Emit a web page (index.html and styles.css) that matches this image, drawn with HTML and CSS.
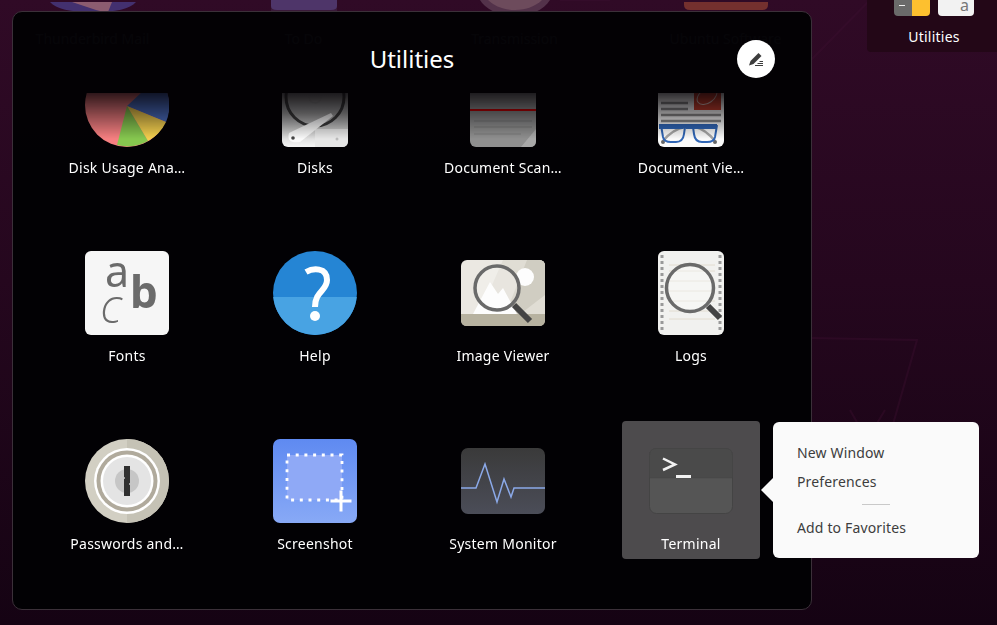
FILE: index.html
```html
<!DOCTYPE html>
<html lang="en">
<head>
<meta charset="utf-8">
<title>Utilities</title>
<link rel="stylesheet" href="styles.css">
</head>
<body>
<div class="desktop">
  <svg class="wallpaper" viewBox="0 0 997 625" aria-hidden="true">
    <g fill="none" stroke="#3c0f30" stroke-width="2">
      <path d="M811 338 L917 340 L880 470 L811 560"/>
      <path d="M850 410 L867 440 L885 410"/>
      <path d="M870 0 L811 60"/>
      <path d="M560 0 L610 0"/>
    </g>
  </svg>

  <div class="bg-apps">
    <div class="bg-app">
      <svg class="bg-icon" width="86" height="12" viewBox="0 0 86 12"><path d="M0 0C6 7 20 10 43 10S80 7 86 0Z" fill="#43306f"/><path d="M22 0 L46 8 Q52 10 58 10 L62 0Z" fill="#8c5c70"/></svg>
      <span class="bg-label">Thunderbird Mail</span>
    </div>
    <div class="bg-app">
      <svg class="bg-icon" width="66" height="16" viewBox="0 0 66 16"><path d="M0 4H66V12Q66 16 60 16H6Q0 16 0 12Z" fill="#3a1a3a"/><path d="M0 0H66V6Q66 10 60 10H6Q0 10 0 6Z" fill="#4e3569"/></svg>
      <span class="bg-label">To Do</span>
    </div>
    <div class="bg-app">
      <svg class="bg-icon" width="70" height="16" viewBox="0 0 70 16"><path d="M0 0C6 10 20 16 35 16S64 10 70 0Z" fill="#53324a"/><path d="M8 0C14 6 24 10 35 10S56 6 62 0Z" fill="#6d4b5c"/></svg>
      <span class="bg-label">Transmission</span>
    </div>
    <div class="bg-app">
      <svg class="bg-icon" width="84" height="12" viewBox="0 0 84 12"><path d="M0 0H84V3Q84 8 78 8H6Q0 8 0 3Z" fill="#74302e"/></svg>
      <span class="bg-label">Ubuntu Software</span>
    </div>
    <div class="folder-tile">
      <svg class="mini" width="80" height="16" viewBox="0 0 80 16" aria-hidden="true">
        <path d="M0 0H18V16H4Q0 16 0 12Z" fill="#6a6a6a"/>
        <path d="M18 0H36V12Q36 16 32 16H18Z" fill="#fdc02f"/>
        <path d="M5 5.500H11" stroke="#eee" stroke-width="1"/>
        <path d="M44 0H80V12Q80 16 76 16H48Q44 16 44 12Z" fill="#f2f2f2"/>
        <text x="66" y="11" class="mini-a">a</text>
      </svg>
      <span class="folder-label">Utilities</span>
    </div>
  </div>

  <section class="dialog">
    <header class="dialog-head">
      <h1 class="dialog-title">Utilities</h1>
      <button class="edit-btn" aria-label="Rename">
        <svg width="16" height="16" viewBox="0 0 16 16"><path d="M1 14.500 L2.500 10 L10.500 2 L13.500 5 L5.500 13 Z" fill="#3d3d3d"/><path d="M7 14.500H15M9.500 12.500H15M11.500 10.500H15" stroke="#3d3d3d" stroke-width="1"/></svg>
      </button>
    </header>

    <div class="viewport">
      <div class="app-grid">

        <div class="app">
          <svg class="icon" viewBox="0 0 84 84">
            <circle cx="42" cy="42" r="42" fill="#f67f81"/>
            <path d="M42 43 L73 14 A42 42 0 0 1 81 59Z" fill="#4c70c4"/>
            <path d="M42 43 L81 59 A42 42 0 0 1 63 78Z" fill="#f5d04f"/>
            <path d="M42 43 L63 78 A42 42 0 0 1 32 82Z" fill="#86c74f"/>
          </svg>
          <span class="app-label">Disk Usage Ana…</span>
        </div>

        <div class="app">
          <svg class="icon" viewBox="0 0 84 84">
            <defs><linearGradient id="dk" x1="0" y1="0" x2="0" y2="1"><stop offset="0" stop-color="#777"/><stop offset=".6" stop-color="#a0a0a0"/><stop offset="1" stop-color="#f5f5f5"/></linearGradient></defs>
            <rect x="9" y="0" width="66" height="84" rx="6" fill="url(#dk)"/>
            <path d="M42 66H75V78Q75 84 69 84H42Z" fill="#e6e6e6"/>
            <circle cx="42" cy="34" r="29" fill="none" stroke="#3a3a3a" stroke-width="3"/>
            <circle cx="42" cy="34" r="6" fill="none" stroke="#8f8f8f" stroke-width="1.500"/>
            <path d="M16 70 L58 50 L60 53 L27 79 Q13 81 16 70Z" fill="#fafafa"/>
            <circle cx="20" cy="75" r="1.800" fill="#444"/>
            <circle cx="64" cy="76" r="1.500" fill="#bbb"/>
          </svg>
          <span class="app-label">Disks</span>
        </div>

        <div class="app">
          <svg class="icon" viewBox="0 0 84 84">
            <rect x="9" y="0" width="66" height="84" rx="6" fill="#8f8f8f"/>
            <path d="M60 84 L75 66 V78 Q75 84 69 84Z" fill="#a8a8a8"/>
            <path d="M9 30H75V47H9Z" fill="#9c9c9c"/>
            <rect x="9" y="46" width="66" height="2" fill="#d40000"/>
            <path d="M13 58H71M13 64H71M13 71H60" stroke="#7a7a7a" stroke-width="1"/>
          </svg>
          <span class="app-label">Document Scan…</span>
        </div>

        <div class="app">
          <svg class="icon" viewBox="0 0 84 84">
            <rect x="9" y="0" width="66" height="84" rx="6" fill="#fafafa"/>
            <rect x="45" y="0" width="27" height="47" fill="#d1432f"/>
            <ellipse cx="58" cy="33" rx="11" ry="7" transform="rotate(-35 58 33)" fill="none" stroke="#f2d6d0" stroke-width="1"/>
            <path d="M12 40H39M12 46H39M12 52H72M12 58H72" stroke="#8e8e8e" stroke-width="2.500"/>
            <path d="M14 78 Q24 66 36 64M66 78 Q56 66 46 64" fill="none" stroke="#a5a5a5" stroke-width="2.500"/>
            <circle cx="14" cy="79" r="2" fill="#666"/><circle cx="66" cy="79" r="2" fill="#666"/>
            <path d="M10 61H68V66H37Q36 64 34 66H10Z" fill="#2f65b5"/>
            <path d="M12 62L14 74Q15 79 22 79H27Q34 79 35 71L36 64M44 64L45 71Q46 79 53 79H58Q65 79 66 74L68 62" fill="none" stroke="#2f65b5" stroke-width="2"/>
          </svg>
          <span class="app-label">Document Vie…</span>
        </div>

        <div class="app">
          <svg class="icon" viewBox="0 0 84 84">
            <rect width="84" height="84" rx="6" fill="#f6f6f6"/>
            <text x="20" y="36" class="glyph glyph-thin">a</text>
            <text x="15" y="72" class="glyph glyph-italic">C</text>
            <text x="45" y="57" class="glyph glyph-bold">b</text>
          </svg>
          <span class="app-label">Fonts</span>
        </div>

        <div class="app">
          <svg class="icon" viewBox="0 0 84 84">
            <circle cx="42" cy="42" r="42" fill="#2585d4"/>
            <path d="M0.200 46H83.800A42 42 0 0 1 .2 46Z" fill="#48a3e3"/>
            <path d="M33 21C40 17 54 16 54 29C54 40 42 40 42 56" fill="none" stroke="#fff" stroke-width="6"/>
            <circle cx="42" cy="65" r="5" fill="#fff"/>
          </svg>
          <span class="app-label">Help</span>
        </div>

        <div class="app">
          <svg class="icon" viewBox="0 0 84 84">
            <rect y="9" width="84" height="66" rx="6" fill="#ebe8e2"/>
            <path d="M42 9H78Q84 9 84 15V64H18Z" fill="#e0ddd4"/>
            <path d="M66 9H78Q84 9 84 15V44L58 64H44Z" fill="#d0cdc2"/>
            <path d="M0 63H84V69Q84 75 78 75H6Q0 75 0 69Z" fill="#b7b2a0"/>
            <path d="M12 63 L29 31 L37 43 L42 37 L56 63Z" fill="#fdfdfd"/>
            <circle cx="64" cy="26" r="9" fill="#fdfdfd"/>
            <circle cx="36" cy="37" r="22" fill="#fff" fill-opacity=".25" stroke="#6a6a6a" stroke-width="3.500"/>
            <path d="M53 54 L69 70" stroke="#444" stroke-width="6"/>
          </svg>
          <span class="app-label">Image Viewer</span>
        </div>

        <div class="app">
          <svg class="icon" viewBox="0 0 84 84">
            <rect x="9" y="0" width="66" height="84" rx="6" fill="#f1f1ef"/>
            <path d="M13 4V80M71 4V80" stroke="#999" stroke-width="3" stroke-dasharray="3 3"/>
            <path d="M20 14H66M20 20H66M20 30H66M20 40H66M20 50H66M20 60H66M20 68H66" stroke="#e2dcd0" stroke-width="1"/>
            <circle cx="41" cy="37" r="23.500" fill="#fff" fill-opacity=".35" stroke="#6a6a6a" stroke-width="3.500"/>
            <path d="M59 55 L71 67" stroke="#444" stroke-width="6"/>
          </svg>
          <span class="app-label">Logs</span>
        </div>

        <div class="app">
          <svg class="icon" viewBox="0 0 84 84">
            <circle cx="42" cy="42" r="42" fill="#d2cfc3"/>
            <path d="M42 0A42 42 0 0 1 42 84Z" fill="#c5c2b5"/>
            <circle cx="42" cy="42" r="33" fill="#fff"/>
            <circle cx="42" cy="42" r="30.500" fill="#b0aa9c"/>
            <circle cx="42" cy="42" r="26.500" fill="#fff"/>
            <circle cx="42" cy="42" r="24" fill="#e4e4e4"/>
            <circle cx="42" cy="42" r="12" fill="#c6c6c6"/>
            <rect x="39" y="27" width="6" height="30" fill="#303030"/>
            <circle cx="39" cy="39" r="1" fill="#c6c6c6"/>
            <circle cx="45" cy="45" r="1" fill="#c6c6c6"/>
          </svg>
          <span class="app-label">Passwords and…</span>
        </div>

        <div class="app">
          <svg class="icon" viewBox="0 0 84 84">
            <defs><linearGradient id="ss" x1="0" y1="0" x2="0" y2="1"><stop offset="0" stop-color="#5f8af1"/><stop offset="1" stop-color="#88a9f6"/></linearGradient></defs>
            <rect width="84" height="84" rx="7" fill="url(#ss)"/>
            <rect x="14" y="16" width="55" height="45" fill="#8fa9f6"/>
            <rect x="14" y="16" width="55" height="45" fill="none" stroke="#fff" stroke-width="2.800" stroke-dasharray="3 5.700"/>
            <path d="M68 51.500V72.500M57.500 62H78.500" stroke="#fff" stroke-width="3"/>
          </svg>
          <span class="app-label">Screenshot</span>
        </div>

        <div class="app">
          <svg class="icon" viewBox="0 0 84 84">
            <defs><linearGradient id="sm" x1="0" y1="0" x2="0" y2="1"><stop offset="0" stop-color="#3a3a3a"/><stop offset="1" stop-color="#4b4d58"/></linearGradient></defs>
            <rect y="9" width="84" height="66" rx="7" fill="url(#sm)"/>
            <path d="M0 49H15L24 25L36 63L43 40L50 58L53 49H84" fill="none" stroke="#8ba9e8" stroke-width="1.500"/>
          </svg>
          <span class="app-label">System Monitor</span>
        </div>

        <div class="app is-active">
          <svg class="icon" viewBox="0 0 84 84">
            <rect x=".5" y="9.500" width="83" height="65" rx="7" fill="#555" stroke="#444"/>
            <path d="M.5 39V16.500Q.5 9.500 7.500 9.500H76.500Q83.500 9.500 83.500 16.500V39Z" fill="#4a4a4a" stroke="#444" stroke-width=".5"/>
            <path d="M14 19.500 L26 25.500 L14 31" fill="none" stroke="#f2f2f2" stroke-width="2.500"/>
            <rect x="27" y="36" width="15" height="3" fill="#f2f2f2"/>
          </svg>
          <span class="app-label">Terminal</span>
        </div>

      </div>
    </div>
  </section>

  <div class="menu">
    <div class="menu-item">New Window</div>
    <div class="menu-item">Preferences</div>
    <div class="menu-sep"></div>
    <div class="menu-item">Add to Favorites</div>
  </div>
</div>
</body>
</html>
```

FILE: styles.css
```css
* { box-sizing: border-box; }

html, body { margin: 0; height: 100%; }

body {
  font-family: "Noto Sans", "Open Sans", sans-serif;
  font-size: 14px;
  overflow: hidden;
}

.desktop {
  position: relative;
  width: 997px;
  height: 625px;
  overflow: hidden;
  background: linear-gradient(to bottom, #300a26 0%, #25071e 45%, #150313 100%);
}

.wallpaper {
  position: absolute;
  inset: 0;
  width: 100%;
  height: 100%;
  opacity: .4;
}

.bg-apps {
  position: relative;
  display: grid;
  grid-template-columns: repeat(4, 211px) 1fr 130px;
  margin-left: -13px;
}

.bg-app {
  display: flex;
  flex-direction: column;
  align-items: center;
}

.bg-icon { display: block; height: 29px; padding-bottom: 13px; flex: none; }

.bg-label {
  line-height: 20px;
  color: #ccc;
  white-space: nowrap;
}

.folder-tile {
  grid-column: 6;
  height: 52px;
  padding-left: 4px;
  display: flex;
  flex-direction: column;
  align-items: center;
  background: #230717;
  border-bottom-left-radius: 4px;
}

.mini { display: block; margin-bottom: 11px; flex: none; }
.mini-a { font-size: 16px; fill: #777; }

.folder-label { line-height: 20px; color: #fff; letter-spacing: .25px; }

.dialog {
  position: absolute;
  left: 12px;
  top: 11px;
  width: 800px;
  height: 599px;
  display: flex;
  flex-direction: column;
  background: rgba(2, 1, 4, .98);
  border: 1px solid #3b3039;
  border-radius: 10px;
  color: #fff;
}

.dialog-head {
  flex: none;
  height: 81px;
  display: grid;
  grid-template-columns: 1fr auto 1fr;
  align-items: center;
  padding: 13px 36px 0;
}

.dialog-title {
  grid-column: 2;
  margin: 0;
  font-size: 24px;
  font-weight: 400;
  line-height: 32px;
}

.edit-btn {
  grid-column: 3;
  justify-self: end;
  width: 38px;
  height: 38px;
  padding: 0;
  border: 0;
  border-radius: 50%;
  background: #fff;
  display: flex;
  align-items: center;
  justify-content: center;
}

.viewport {
  flex: 1;
  min-height: 0;
  overflow: hidden;
  -webkit-mask-image: linear-gradient(to bottom, rgba(0,0,0,.18) 0, #000 46px);
  mask-image: linear-gradient(to bottom, rgba(0,0,0,.18) 0, #000 46px);
}

.app-grid {
  display: grid;
  grid-template-columns: repeat(4, 138px);
  grid-auto-rows: 138px;
  gap: 50px;
  margin-top: -48px;
  padding-left: 45px;
}

.app {
  display: flex;
  flex-direction: column;
  align-items: center;
  padding-top: 18px;
  border-radius: 4px;
}

.app.is-active { background: #4d4b4d; }

.icon { display: block; width: 84px; height: 84px; flex: none; }

.app-label {
  margin-top: 11px;
  line-height: 20px;
  white-space: nowrap;
  letter-spacing: .25px;
}

.glyph { fill: #6b6b6b; font-family: "Noto Sans", sans-serif; }
.glyph-thin { font-size: 43px; font-weight: 400; }
.glyph-italic { font-size: 36px; font-weight: 300; font-style: italic; }
.glyph-bold { font-size: 44px; font-weight: 700; }

.menu {
  position: absolute;
  left: 773px;
  top: 422px;
  width: 206px;
  height: 136px;
  padding: 16px 24px;
  background: #fafafa;
  border-radius: 6px;
  color: #3d3d3d;
  letter-spacing: .15px;
}

.menu::before {
  content: "";
  position: absolute;
  left: -12px;
  top: 56px;
  border-style: solid;
  border-width: 12px 12px 12px 0;
  border-color: transparent #fafafa transparent transparent;
}

.menu-item { height: 29px; line-height: 29px; }

.menu-sep {
  width: 28px;
  height: 1px;
  margin: 8px auto 8px;
  background: #c9c9c9;
}
```
